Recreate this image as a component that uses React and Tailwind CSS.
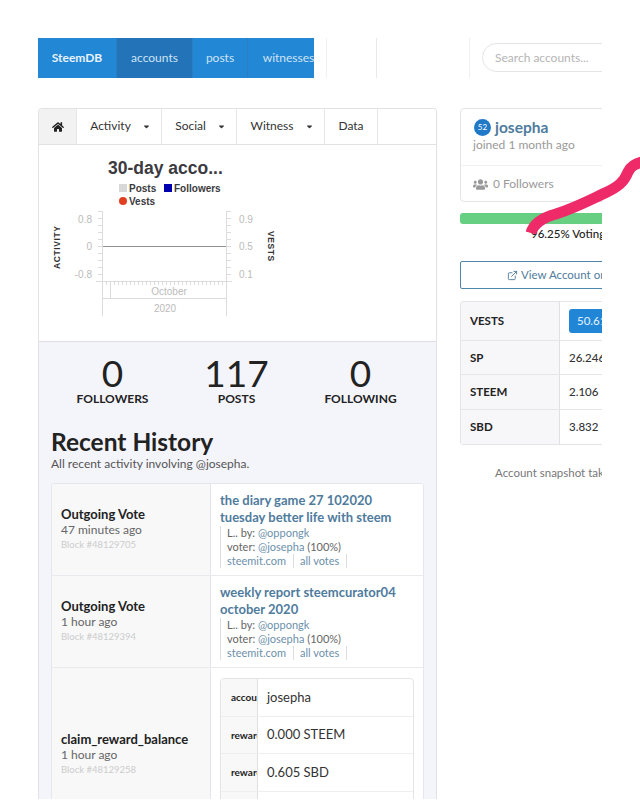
import React from 'react';
import { ExternalLink } from 'lucide-react';
import { FaHome, FaUsers, FaCaretDown } from 'react-icons/fa';

const NavItem = ({ label, width, active, bold }) => (
  <div
    className={`flex items-center justify-center shrink-0 h-full text-[12px] text-[#cfe3f5] border-r border-[#2a7fc4] ${active ? 'bg-[#2273b8]' : ''} ${bold ? 'font-bold text-[#e8f2fb]' : ''}`}
    style={{ width }}
  >
    {label}
  </div>
);

const Tab = ({ label, width, caret }) => (
  <div className={`flex items-center justify-center gap-[11px] h-full border-r border-[#e6e6e6] text-[12px] text-[#333] pb-px ${caret ? 'pl-[3px]' : ''}`} style={{ width }}>
    {label}
    {caret && <FaCaretDown size={9} className="text-[#333]" />}
  </div>
);

const Stat = ({ value, label }) => (
  <div className="w-[124px] flex flex-col items-center">
    <div className="text-[37px] leading-[36px] text-[#222]">{value}</div>
    <div className="text-[12px] leading-[16px] font-bold text-[#222]">{label}</div>
  </div>
);

const Chart = () => (
  <svg width="398" height="197" viewBox="0 0 398 197" className="block">
    <g fontFamily="'Liberation Sans', sans-serif">
      <text x="69" y="29" fontSize="17.5" fontWeight="700" fill="#3a3a40">30-day acco...</text>
      <rect x="80" y="39" width="8" height="8" fill="#d8d8d8" />
      <text x="90" y="47" fontSize="10" fontWeight="700" fill="#3a3a40">Posts</text>
      <rect x="125" y="39" width="8" height="8" fill="#0000b0" />
      <text x="135" y="47" fontSize="10" fontWeight="700" fill="#3a3a40">Followers</text>
      <circle cx="84" cy="56" r="4" fill="#e04020" />
      <text x="90" y="60" fontSize="10" fontWeight="700" fill="#3a3a40">Vests</text>
      <text transform="translate(21 124) rotate(-90)" fontSize="8.5" fontWeight="700" letterSpacing="0.6" fill="#333">ACTIVITY</text>
      <text transform="translate(229 86) rotate(90)" fontSize="8.5" fontWeight="700" letterSpacing="0.6" fill="#333">VESTS</text>
      <g fontSize="10" fill="#bbb" textAnchor="end">
        <text x="53" y="78">0.8</text>
        <text x="53" y="105">0</text>
        <text x="53" y="133">-0.8</text>
      </g>
      <g fontSize="10" fill="#bbb">
        <text x="200" y="78">0.9</text>
        <text x="200" y="105">0.5</text>
        <text x="200" y="133">0.1</text>
      </g>
      <g stroke="#dcdcdc" fill="none">
        <path d="M63.5 66V171M187.5 66V171M71.5 136V153M63 153.5H187M57 136.5H193" />
        <path d="M59 66.5H64M59 73.5H64M59 80.5H64M59 87.5H64M59 94.5H64M59 101.5H64M59 108.5H64M59 115.5H64M59 122.5H64M59 129.5H64" />
        <path d="M187 66.5H192M187 73.5H192M187 80.5H192M187 87.5H192M187 94.5H192M187 101.5H192M187 108.5H192M187 115.5H192M187 122.5H192M187 129.5H192" />
        <path d="M67.5 136V140M71.5 136V140M75.5 136V140M79.5 136V140M83.5 136V140M87.5 136V140M91.5 136V140M95.5 136V140M99.5 136V140M103.5 136V140M107.5 136V140M111.5 136V140M115.5 136V140M119.5 136V140M123.5 136V140M127.5 136V140M131.5 136V140M135.5 136V140M139.5 136V140M143.5 136V140M147.5 136V140M151.5 136V140M155.5 136V140M159.5 136V140M163.5 136V140M167.5 136V140M171.5 136V140M175.5 136V140M179.5 136V140M183.5 136V140" />
      </g>
      <path d="M64 101.5H187" stroke="#8f8f8f" />
      <text x="130" y="150" fontSize="10" fill="#bbb" textAnchor="middle">October</text>
      <text x="126" y="167" fontSize="10" fill="#bbb" textAnchor="middle">2020</text>
    </g>
  </svg>
);

const VoteRow = ({ title, ago, block }) => (
  <div className="flex h-[92px] border-b border-[#e9e9ee]">
    <div className="w-[159px] shrink-0 bg-[#f8f8f9] border-r border-[#e4e4ea] pl-[9px] flex flex-col justify-center">
      <div className="text-[13px] leading-[15px] font-bold text-[#222]">Outgoing Vote</div>
      <div className="text-[12px] leading-[15px] text-[#666]">{ago}</div>
      <div className="text-[9.5px] leading-[15px] text-[#cccccc]">Block #{block}</div>
    </div>
    <div className="flex-1 bg-white pl-[9px] pt-[8px]">
      <div className="text-[13px] leading-[16.5px] font-bold text-[#4f7b9d]">
        {title.map((line) => <div key={line}>{line}</div>)}
      </div>
      <div className="text-[11px] leading-[14px] text-[#666] mt-[1px]">
        <div className="border-l border-[#ddd] pl-[6px]">L.. by: <span className="text-[#6c90ab]">@oppongk</span></div>
        <div className="border-l border-[#ddd] pl-[6px]">voter: <span className="text-[#6c90ab]">@josepha</span> (100%)</div>
        <div className="flex text-[#6c90ab]">
          <span className="border-l border-r border-[#ddd] pl-[6px] pr-[7px]">steemit.com</span>
          <span className="border-r border-[#ddd] pl-[6px] pr-[7px]">all votes</span>
        </div>
      </div>
    </div>
  </div>
);

const RewardRow = ({ label, value, height }) => (
  <div className="flex border-b border-[#eeeeee]" style={{ height }}>
    <div className="w-[37px] shrink-0 bg-[#f8f8f9] border-r border-[#e0e0e0] flex items-center pl-[10px] overflow-hidden text-[10px] font-bold text-[#222]">{label}</div>
    <div className="flex-1 flex items-center pl-[9px] text-[13px] text-[#333]">{value}</div>
  </div>
);

const WalletRow = ({ label, height, children }) => (
  <div className="flex border-b border-[#e6e6ea] last:border-b-0" style={{ height }}>
    <div className="w-[99px] shrink-0 bg-[#f7f6f8] border-r border-[#e0e0e4] flex items-center pl-[9px] text-[11.5px] font-bold text-[#222]">{label}</div>
    <div className="flex-1 flex items-center pl-[9px] text-[11.5px] font-medium text-[#333] whitespace-nowrap">{children}</div>
  </div>
);

export default function App() {
  return (
    <div className="relative w-[640px] h-[810px] overflow-hidden bg-white font-['Lato','Open_Sans',sans-serif]">
      <div className="w-[602px] h-[799px] overflow-hidden pt-[38px] pl-[38px]">
        {/* barra superior */}
        <div className="flex h-[40px]">
          <div className="flex w-[276px] h-full bg-[#2287d4] overflow-hidden">
            <NavItem label="SteemDB" width={79} bold />
            <NavItem label="accounts" width={76} active />
            <NavItem label="posts" width={55} />
            <NavItem label="witnesses" width={82} />
          </div>
          <div className="w-[12px]" />
          <div className="w-[50px] border-l border-[#f0f0f0] h-[40px]" />
          <div className="w-[93px] border-l border-[#e8e8e8] h-[40px]" />
          <div className="flex-1 border-l border-[#f0f0f0] h-[40px] pl-[12px] pt-[5px] overflow-hidden">
            <div className="w-[160px] h-[29px] rounded-full border border-[#e4e4e4] flex items-center pl-[12px] text-[12px] text-[#b5b5b5]">Search accounts...</div>
          </div>
        </div>

        <div className="flex mt-[30px]">
          {/* columna izquierda */}
          <div className="w-[399px] shrink-0 h-[691px] border border-b-0 border-[#e2e2e6] rounded-t-[4px] overflow-hidden">
            <div className="flex h-[36px] border-b border-[#e2e2e2] bg-white">
              <div className="w-[38px] bg-[#f2f2f2] border-r border-[#e6e6e6] flex items-center justify-center">
                <FaHome size={12} className="text-[#222]" />
              </div>
              <Tab label="Activity" width={85} caret />
              <Tab label="Social" width={75} caret />
              <Tab label="Witness" width={88} caret />
              <Tab label="Data" width={53} />
            </div>
            <div className="h-[197px] bg-white border-b border-[#e4dbe6]">
              <Chart />
            </div>
            <div className="h-[458px] bg-[#f4f4fb] px-[12px] pt-[13px]">
              <div className="flex justify-center -ml-[2px]">
                <Stat value="0" label="FOLLOWERS" />
                <Stat value="117" label="POSTS" />
                <Stat value="0" label="FOLLOWING" />
              </div>
              <h1 className="text-[24.5px] leading-[30px] font-bold text-[#222] mt-[20px]">Recent History</h1>
              <p className="text-[12px] leading-[14px] text-[#555]">All recent activity involving @josepha.</p>
              <div className="w-[373px] mt-[12px] border border-[#e6e6ec] rounded-[3px] bg-white overflow-hidden h-[400px]">
                <VoteRow title={['the diary game 27 102020', 'tuesday better life with steem']} ago="47 minutes ago" block="48129705" />
                <VoteRow title={['weekly report steemcurator04', 'october 2020']} ago="1 hour ago" block="48129394" />
                <div className="flex h-[200px]">
                  <div className="w-[159px] shrink-0 bg-[#f8f8f9] border-r border-[#e4e4ea] pl-[9px] pt-[64px]">
                    <div className="text-[13px] leading-[15px] font-bold text-[#222]">claim_reward_balance</div>
                    <div className="text-[12px] leading-[15px] text-[#666]">1 hour ago</div>
                    <div className="text-[9.5px] leading-[15px] text-[#cccccc]">Block #48129258</div>
                  </div>
                  <div className="flex-1 bg-white pl-[9px] pr-[9px] pt-[10px]">
                    <div className="border border-[#e4e4e8] rounded-[4px] overflow-hidden">
                      <RewardRow label="account" value="josepha" height={38} />
                      <RewardRow label="reward_steem" value="0.000 STEEM" height={37} />
                      <RewardRow label="reward_sbd" value="0.605 SBD" height={38} />
                      <RewardRow label="reward_vests" value="" height={38} />
                    </div>
                  </div>
                </div>
              </div>
            </div>
          </div>

          {/* columna derecha */}
          <div className="ml-[23px] w-[160px] shrink-0">
            <div className="h-[94px] border border-[#e4e4e4] rounded-[4px] pl-[12px] pt-[8px] bg-white">
              <div className="flex items-center gap-[4px] ml-px">
                <span className="w-[17px] h-[17px] rounded-full bg-[#2079c7] flex items-center justify-center text-[8px] text-white">52</span>
                <span className="text-[15.5px] leading-[20px] font-bold text-[#4f7b9d]">josepha</span>
              </div>
              <div className="text-[12px] leading-[16px] text-[#999]">joined 1 month ago</div>
              <div className="border-t border-[#f0f0f0] mt-[12px] -ml-[12px] pl-[12px] pt-[9px] flex items-center gap-[5px] text-[12px] text-[#999]">
                <FaUsers size={15} className="text-[#999]" />
                0 Followers
              </div>
            </div>
            <div className="h-[11px] mt-[11px] bg-[#66cf82] rounded-l-[3px]" />
            <div className="text-[11.5px] leading-[14px] font-medium text-[#222] mt-[3px] pl-[71px] whitespace-nowrap">96.25% Voting Power</div>
            <div className="h-[28px] mt-[20px] border border-[#4f86ab] rounded-[2px] pl-[46px] flex items-center gap-[3px] whitespace-nowrap text-[11.5px] text-[#4f7b9d]">
              <ExternalLink size={11} className="shrink-0" />
              View Account on Steemit
            </div>
            <div className="mt-[12px] h-[144px] border border-[#e4e4e8] rounded-[3px] overflow-hidden">
              <WalletRow label="VESTS" height={39}>
                <span className="bg-[#2286d6] text-[#dcecf9] rounded-[3px] px-[8px] py-[3px]">50.613</span>
              </WalletRow>
              <WalletRow label="SP" height={34}>26.246</WalletRow>
              <WalletRow label="STEEM" height={35}>2.106</WalletRow>
              <WalletRow label="SBD" height={34}>3.832</WalletRow>
            </div>
            <div className="mt-[21px] pl-[35px] text-[11.5px] leading-[14px] text-[#777] whitespace-nowrap">Account snapshot taken</div>
          </div>
        </div>
      </div>

      {/* trazo rosa encima de la captura */}
      <svg width="640" height="810" viewBox="0 0 640 810" className="absolute inset-0 pointer-events-none">
        <path d="M531 233C534 222 545 217 556 214C575 208 590 200 605 193C618 187 624 182 628 172C631 166 635 164 642 162" fill="none" stroke="#ee2a68" strokeWidth="11" />
      </svg>
    </div>
  );
}
